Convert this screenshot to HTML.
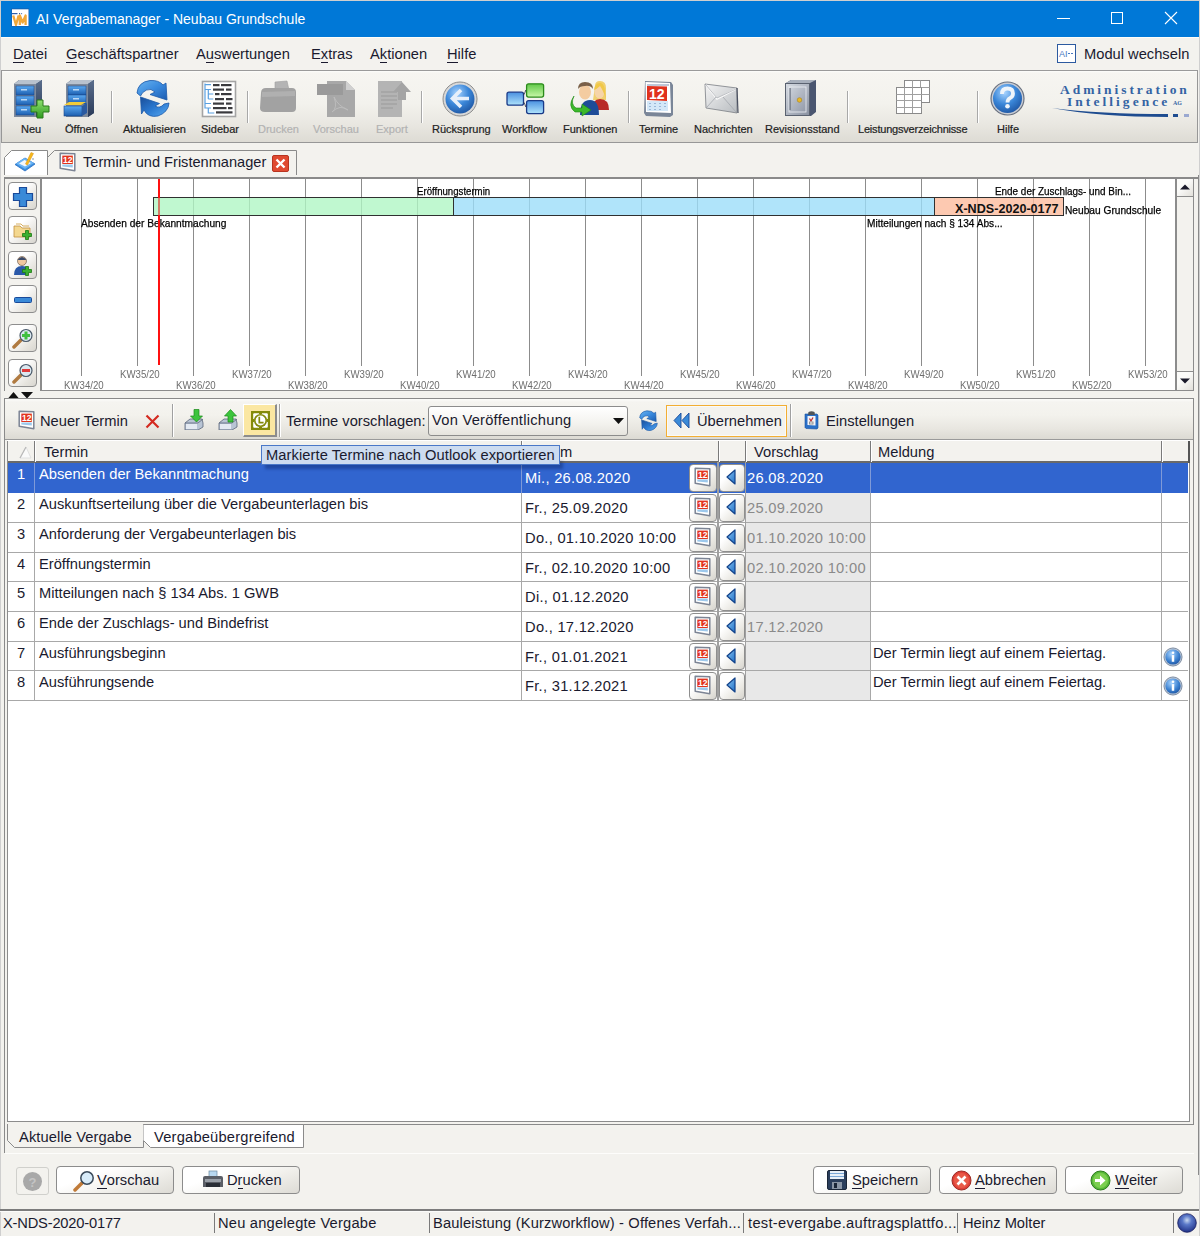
<!DOCTYPE html>
<html><head><meta charset="utf-8">
<style>
*{box-sizing:border-box}
html,body{margin:0;padding:0}
body{width:1200px;height:1236px;overflow:hidden;position:relative;background:#f3f2ee;font-family:"Liberation Sans",sans-serif;color:#1a1a2e;font-size:14.7px}
.a{position:absolute}
.t{position:absolute;white-space:nowrap;line-height:1}
.tl{top:124px;font-size:11px;color:#222;-webkit-text-stroke:0.2px #222}
.dis{color:#b0b0b0;-webkit-text-stroke:0.2px #b8b8b8}
.kw{font-size:10.6px;color:#6e6e6e;transform:scaleX(0.91);transform-origin:0 0}
.ct{font-size:11px;color:#000;-webkit-text-stroke:0.25px #000;transform-origin:0 0}
.lbtn{width:29px;height:28px;border:1px solid #8e8e8e;border-radius:4px;background:linear-gradient(135deg,#ffffff 35%,#e6e4de 75%,#d8d6d0)}
.gbtn{width:28px;border:1px solid #8e8e8e;border-radius:4px;background:linear-gradient(135deg,#ffffff 35%,#e8e6e0 75%,#d6d4ce)}
.dt{letter-spacing:0.28px}
.bbtn{height:28px;border:1px solid #8c8c8c;border-radius:4px;background:linear-gradient(160deg,#ffffff 30%,#f2f1ed 60%,#dddbd5 100%)}
u{text-decoration:none;border-bottom:1px solid currentColor;display:inline-block;line-height:0.95}
</style></head><body>
<!-- window frame -->
<div class="a" style="left:0;top:0;width:1200px;height:1236px;border-left:1px solid #cfcfcf;border-right:1px solid #cfcfcf;border-top:1px solid #cfcfcf"></div>
<!-- title bar -->
<div class="a" style="left:1px;top:1px;width:1198px;height:36px;background:#0078d7"></div>
<svg class="a" style="left:8px;top:5px" width="25" height="25" viewBox="8 5 25 25">
 <rect x="11.5" y="8.5" width="17.5" height="18" fill="#1a5aa8"/>
 <rect x="12" y="9.3" width="16.5" height="16.7" fill="#fff"/>
 <rect x="12" y="13" width="5.5" height="1.2" fill="#3060a8"/><rect x="19" y="13" width="1.1" height="1.2" fill="#3060a8"/><rect x="21" y="13" width="1.1" height="1.2" fill="#6a8ac0"/>
 <path d="M13.2 15.5 L16 25 L18.6 15.5 M19.8 25 V15.5 L22.6 22.5 L25.6 15.5 V25" stroke="#f2a838" stroke-width="2.3" fill="none" stroke-linejoin="round"/>
</svg>
<div class="t" style="left:36px;top:12px;color:#fff;font-size:14px">AI Vergabemanager - Neubau Grundschule</div>
<div class="a" style="left:1057px;top:18px;width:13px;height:1px;background:#fff"></div>
<div class="a" style="left:1111px;top:12px;width:12px;height:12px;border:1px solid #fff"></div>
<svg class="a" style="left:1164px;top:11px" width="14" height="14"><path d="M1 1L13 13M13 1L1 13" stroke="#fff" stroke-width="1.1"/></svg>
<!-- menu -->
<div class="a" style="left:1px;top:37px;width:1198px;height:1px;background:#fdfdfa"></div>
<div class="t" style="left:13px;top:47px"><u>D</u>atei</div>
<div class="t" style="left:66px;top:47px"><u>G</u>eschäftspartner</div>
<div class="t" style="left:196px;top:47px">A<u>u</u>swertungen</div>
<div class="t" style="left:311px;top:47px">E<u>x</u>tras</div>
<div class="t" style="left:370px;top:47px">A<u>k</u>tionen</div>
<div class="t" style="left:447px;top:47px"><u>H</u>ilfe</div>
<svg class="a" style="left:1057px;top:44px" width="19" height="19" viewBox="0 0 19 19">
 <rect x="0.5" y="0.5" width="18" height="18" fill="#fff" stroke="#2c5aa0"/>
 <text x="2" y="13" font-family="Liberation Sans" font-size="9" fill="#4a78c0">AI</text>
 <rect x="11" y="9" width="2" height="1" fill="#4a78c0"/><rect x="14" y="9" width="2" height="1" fill="#4a78c0"/>
</svg>
<div class="t" style="left:1084px;top:47px">Modul wechseln</div>
<!-- toolbar -->
<div class="a" style="left:1px;top:70px;width:1197px;height:73px;border:1px solid #979797;border-top-color:#9a9a9a;background:linear-gradient(#fdfdfb 0px,#f6f5f1 2px,#f3f2ed 45%,#e9e7e1 75%,#dddbd4 100%)"></div>
<svg class="a" style="left:0;top:72px" width="1200" height="70" viewBox="0 72 1200 70">
 <defs>
  <linearGradient id="cabB" x1="0" y1="0" x2="0" y2="1"><stop offset="0" stop-color="#5aa8f0"/><stop offset="1" stop-color="#1d5fb0"/></linearGradient>
  <linearGradient id="cabS" x1="0" y1="0" x2="0" y2="1"><stop offset="0" stop-color="#5a6e8c"/><stop offset="1" stop-color="#2a3a58"/></linearGradient>
  <linearGradient id="grn" x1="0" y1="0" x2="0" y2="1"><stop offset="0" stop-color="#8fe070"/><stop offset="1" stop-color="#2e9a1e"/></linearGradient>
  <radialGradient id="blueBall" cx="0.4" cy="0.3" r="0.8"><stop offset="0" stop-color="#a8d4ff"/><stop offset="0.5" stop-color="#3a86d8"/><stop offset="1" stop-color="#1a4e9a"/></radialGradient>
  <linearGradient id="arr" x1="0" y1="0" x2="1" y2="1"><stop offset="0" stop-color="#6ab4f0"/><stop offset="0.5" stop-color="#3a8ade"/><stop offset="1" stop-color="#1c5cb0"/></linearGradient><linearGradient id="arr2" x1="0" y1="0" x2="1" y2="1"><stop offset="0" stop-color="#1a4e98"/><stop offset="0.5" stop-color="#2a78d0"/><stop offset="1" stop-color="#5aaaf0"/></linearGradient>
 </defs>
 <!-- Neu cabinet -->
 <path d="M14 84 L19 80 L42 80 L42 113 L36 117 L14 117Z" fill="#34486a"/>
 <path d="M14 84 L19 80 L42 80 L36 84Z" fill="#b8c2ce"/>
 <rect x="14" y="84" width="22" height="33" fill="#7d8a9c"/>
 <path d="M36 84 L42 80 L42 113 L36 117Z" fill="url(#cabS)"/>
 <rect x="16" y="86" width="18" height="9" fill="url(#cabB)" stroke="#1a4488" stroke-width="0.5"/>
 <rect x="21" y="89" width="6" height="1.5" fill="#bcd8f4"/>
 <rect x="16" y="96" width="18" height="9" fill="url(#cabB)" stroke="#1a4488" stroke-width="0.5"/>
 <rect x="21" y="99" width="6" height="1.5" fill="#bcd8f4"/>
 <rect x="16" y="106" width="18" height="9" fill="url(#cabB)" stroke="#1a4488" stroke-width="0.5"/>
 <rect x="21" y="109" width="6" height="1.5" fill="#bcd8f4"/>
 <path d="M37 100 h6 v6 h6 v6 h-6 v6 h-6 v-6 h-6 v-6 h6z" fill="url(#grn)" stroke="#2a7a1a" stroke-width="1"/>
 <!-- Oeffnen cabinet -->
 <path d="M66 84 L71 80 L94 80 L94 113 L88 117 L66 117Z" fill="#34486a"/>
 <path d="M66 84 L71 80 L94 80 L88 84Z" fill="#b8c2ce"/>
 <rect x="66" y="84" width="22" height="33" fill="#7d8a9c"/>
 <path d="M88 84 L94 80 L94 113 L88 117Z" fill="url(#cabS)"/>
 <rect x="68" y="86" width="18" height="9" fill="url(#cabB)" stroke="#1a4488" stroke-width="0.5"/>
 <rect x="73" y="89" width="6" height="1.5" fill="#bcd8f4"/>
 <rect x="68" y="95" width="18" height="9" fill="url(#cabB)" stroke="#1a4488" stroke-width="0.5"/>
 <rect x="73" y="98" width="6" height="1.5" fill="#bcd8f4"/>
 <path d="M64 105 L81 105 L86 102 L69 102Z" fill="#f2cc38"/>
 <rect x="64" y="106" width="18" height="10" fill="url(#cabB)" stroke="#1a4488" stroke-width="0.6"/>
 <path d="M82 106 L87 103 L87 113 L82 116Z" fill="#2a5aa0"/>
 <!-- separators -->
 <g stroke="#a8a8a8" stroke-width="1"><path d="M111.5 91V123M247.5 91V123M421.5 91V123M628.5 91V123M847.5 91V123M977.5 91V123"/></g>
 <g stroke="#ffffff" stroke-width="1"><path d="M112.5 91V123M248.5 91V123M422.5 91V123M629.5 91V123M848.5 91V123M978.5 91V123"/></g>
 <!-- Aktualisieren -->
 <path d="M137 93 Q138 82 150 80.5 Q159 80 163 85 L166 83 L167 100 L150 94.5 L155 92 Q151 88 146.5 90 Q142 92 140.5 96 Z" fill="url(#arr)" stroke="#1a58a8" stroke-width="0.8"/>
 <path d="M140.5 97 L159.5 103.5 L155 106 Q160 109 164 104 L169 103 Q168.5 112 158 116 Q148 118 144 110 L141.5 114 Z" fill="url(#arr2)" stroke="#1a58a8" stroke-width="0.8"/>
 <!-- Sidebar doc -->
 <rect x="202.5" y="81.5" width="33" height="35" fill="#fff" stroke="#a4a4a4" stroke-width="1.6"/>
 <g stroke="#5aa0e0" stroke-width="1.2" fill="none"><path d="M205 83.5V108.5M205 84.7h6M205 89.5h6M208.3 89.5V99M208.3 94h5M208.3 99h5M205 103.5h6M205 108h6M208.3 108V113h6"/></g>
 <g fill="#3a3a3e">
  <rect x="213" y="84" width="6.5" height="2.2"/><rect x="221" y="84" width="10.5" height="2.2"/>
  <rect x="213" y="88.5" width="11" height="2.2"/><rect x="226" y="88.5" width="5.5" height="2.2"/>
  <rect x="215" y="93" width="4.5" height="2.2"/><rect x="221" y="93" width="10.5" height="2.2"/>
  <rect x="215" y="98" width="9" height="2.2"/><rect x="226" y="98" width="6.5" height="2.2"/>
  <rect x="213" y="102.5" width="11" height="2.2"/><rect x="226" y="102.5" width="5.5" height="2.2"/>
  <rect x="213" y="107" width="13.5" height="2.2"/><rect x="228" y="107" width="4.5" height="2.2"/>
  <rect x="216" y="111.3" width="16.5" height="2.2"/>
 </g>
 <!-- Drucken disabled -->
 <path d="M275 82 L287 81 L289 90 L275 91Z" fill="#b4b4b4" stroke="#a0a0a0" stroke-width="0.6"/>
 <path d="M261 93 Q261 88 266 88 L292 88 Q296 88 296 92 L296 108 Q296 112 292 112 L265 112 Q260 112 260 108Z" fill="#a2a2a2"/>
 <path d="M262 92 L295 91 L295 96 L262 97Z" fill="#b0b0b0"/>
 <!-- Vorschau disabled -->
 <path d="M327 81 L346 81 L355 90 L355 117 L327 117Z" fill="#a8a8a8"/>
 <path d="M346 81 L346 90 L355 90Z" fill="#d0d0d0"/>
 <rect x="317" y="84" width="26" height="11" fill="#9a9a9a"/>
 <path d="M334 97 Q338 108 332 112 Q340 104 348 110 Q338 106 334 97" stroke="#bcbcbc" fill="none"/>
 <!-- Export disabled -->
 <path d="M378 81 L402 81 L402 117 L378 117Z" fill="#b4b4b4"/>
 <g stroke="#9a9a9a"><path d="M381 92h16M381 96h16M381 100h16M381 104h16M381 108h12"/></g>
 <path d="M393 92 L402 82 L411 92 L406 92 L406 100 L398 100 L398 92Z" fill="#a4a4a4"/>
 <!-- Ruecksprung -->
 <circle cx="460" cy="99" r="17" fill="#d8d8d8" stroke="#8c8c8c" stroke-width="1"/>
 <circle cx="460" cy="99" r="14.5" fill="url(#blueBall)"/>
 <path d="M461 90 L452.5 98.5 L461 107 M453 98.5 H469" stroke="#e8f0fa" stroke-width="3.6" fill="none" stroke-linejoin="miter"/>
 <!-- Workflow -->
 <linearGradient id="wfB" x1="0" y1="0" x2="0" y2="1"><stop offset="0" stop-color="#4a90e0"/><stop offset="1" stop-color="#b0e4fc"/></linearGradient>
 <linearGradient id="wfG" x1="0" y1="0" x2="0" y2="1"><stop offset="0" stop-color="#60c848"/><stop offset="1" stop-color="#c8f8a8"/></linearGradient>
 <rect x="507" y="92.2" width="16.5" height="13" rx="2" fill="url(#wfB)" stroke="#1a3a88" stroke-width="1.3"/>
 <rect x="526.6" y="83.8" width="17" height="13.3" rx="2" fill="url(#wfG)" stroke="#2a8a1a" stroke-width="1.3"/>
 <rect x="526.6" y="100.6" width="17" height="13" rx="2" fill="url(#wfB)" stroke="#1a3a88" stroke-width="1.3"/>
 <path d="M523.5 95 Q525 93 525.8 90 M523.5 102 Q525 104 525.8 107" stroke="#303848" stroke-width="0.9" fill="none"/>
 <!-- Funktionen people -->
 <path d="M595 86 Q595 81 600 81 Q606 81 606 88 L606 100 L593 100Z" fill="#f0d070"/>
 <ellipse cx="599.5" cy="92" rx="5" ry="6.5" fill="#f6d4a8"/>
 <path d="M594 90 Q595 82 601 83 Q605 85 605 92 L606 99 Q603 90 600 86 Q597 89 594 90Z" fill="#f0c848"/>
 <path d="M592 110 Q592 99 600 99 Q609 99 609 110Z" fill="#b82a28"/>
 <ellipse cx="585" cy="92" rx="6" ry="7.5" fill="#f4cca0"/>
 <path d="M578 89 Q578 82 585 82 Q593 82 593 89 Q590 85 585 86 Q580 86 578 89Z" fill="#7a6048"/>
 <path d="M580 115 Q580 100 590 100 Q599 100 599 115Z" fill="#1e4c98"/>
 <path d="M574 96 Q570 104 576 108 L582 108 L582 104 L591 110 L582 116 L582 112 L575 112 Q567 106 574 96Z" fill="#3cb82c" stroke="#1e8a14" stroke-width="0.6"/>
 <!-- Termine calendar -->
 <path d="M645 81 L671 82 L673 85 L673 115 L670 117 L646 116 L644 113Z" fill="#7a8698"/>
 <path d="M645.5 82 L670 83 L671 113 L646 112Z" fill="#fff"/>
 <rect x="647" y="84" width="22" height="2" fill="#c0c8d8"/>
 <path d="M647 86 L667 86.5 L667 101 L647 100Z" fill="#e0321e"/>
 <text x="649" y="99" font-family="Liberation Sans" font-weight="bold" font-size="14" fill="#fff">12</text>
 <rect x="647" y="101" width="21" height="10" fill="#d4e8f8"/>
 <g fill="#9ab8d8"><rect x="649" y="103" width="2" height="1"/><rect x="654" y="103" width="2" height="1"/><rect x="659" y="103" width="2" height="1"/><rect x="664" y="103" width="2" height="1"/><rect x="649" y="106" width="2" height="1"/><rect x="654" y="106" width="2" height="1"/><rect x="659" y="106" width="2" height="1"/><rect x="664" y="106" width="2" height="1"/><rect x="649" y="109" width="2" height="1"/><rect x="654" y="109" width="2" height="1"/><rect x="659" y="109" width="2" height="1"/></g>
 <!-- Nachrichten envelope -->
 <linearGradient id="env" x1="0" y1="0" x2="1" y2="1"><stop offset="0" stop-color="#f4f4f4"/><stop offset="1" stop-color="#b8bcc0"/></linearGradient>
 <path d="M705 84 L737 88 L737 113 L706 108Z" fill="url(#env)" stroke="#7a7e84" stroke-width="0.8"/>
 <path d="M706 85 L717 99 L736 89" stroke="#fafafa" stroke-width="1.6" fill="none"/>
 <path d="M706 85 L717 98 L736 89" stroke="#9a9ea4" stroke-width="0.6" fill="none"/>
 <path d="M707 107 L716 97 M736 112 L723 97" stroke="#a4a8ae" stroke-width="0.8" fill="none"/>
 <path d="M737 88 L738 113" stroke="#4a5060" stroke-width="1.2"/>
 <!-- Revisionsstand safe -->
 <linearGradient id="safeF" x1="0" y1="0" x2="1" y2="1"><stop offset="0" stop-color="#d8dde4"/><stop offset="1" stop-color="#8890a0"/></linearGradient>
 <path d="M786 83 L791 80 L816 80 L816 112 L811 116 L786 116Z" fill="#4a5670"/>
 <path d="M786 83 L791 80 L816 80 L810 83Z" fill="#a8b0bc"/>
 <rect x="785.5" y="83.5" width="24" height="32" fill="url(#safeF)" stroke="#5a6270"/>
 <rect x="789" y="87" width="17" height="25" fill="none" stroke="#eef0f4" stroke-width="0.8"/>
 <rect x="789.5" y="88" width="1.2" height="22" fill="#6a7280"/>
 <circle cx="799.5" cy="100" r="2.3" fill="#e8b828" stroke="#a07810" stroke-width="0.5"/>
 <!-- Leistungsverzeichnisse grid -->
 <g fill="#fff" stroke="#8a8a8a" stroke-width="1">
  <rect x="904.5" y="80.5" width="25" height="22"/>
  <rect x="896.5" y="87.5" width="25" height="26"/>
 </g>
 <g stroke="#a0a0a0"><path d="M904.5 87.5V113M912.5 87.5V113M896.5 94.5H921.5M896.5 100.5H921.5M896.5 107.5H921.5M912.5 80.5V87.5M920.5 80.5V87.5M921.5 87.5H929.5M921.5 94.5H929.5"/></g>
 <!-- Hilfe -->
 <circle cx="1007.5" cy="98.5" r="16.5" fill="#c8ccd4" stroke="#6a7280" stroke-width="1.2"/>
 <circle cx="1007.5" cy="98.5" r="14.5" fill="url(#blueBall)"/>
 <path d="M1002 94 Q1002 88.5 1007.5 88.5 Q1013 88.5 1013 93.5 Q1013 96.5 1010 98.2 Q1007.5 99.6 1007.5 102.5" stroke="#eef4fa" stroke-width="3.8" fill="none"/>
 <circle cx="1007.5" cy="106.3" r="2.3" fill="#eef4fa"/>
 <!-- logo -->
 <text x="1060" y="94" font-family="Liberation Serif" font-weight="bold" font-size="13.5" letter-spacing="2.95" fill="#3464a4">Administration</text>
 <text x="1067" y="105.5" font-family="Liberation Serif" font-weight="bold" font-size="13.5" letter-spacing="3.05" fill="#3464a4">Intelligence</text>
 <text x="1173" y="105" font-family="Liberation Serif" font-weight="bold" font-size="6" fill="#3464a4">AG</text>
 <path d="M1052 108 Q1100 114 1168 114 L1168 117 Q1100 117 1052 108Z" fill="#1e4c90"/>
 <rect x="1173" y="114" width="5" height="3" fill="#1e4c90"/>
 <rect x="1184" y="114" width="5" height="3" fill="#9aa8d0"/>
</svg>
<div class="t tl" style="left:21px">Neu</div>
<div class="t tl" style="left:65px">Öffnen</div>
<div class="t tl" style="left:123px">Aktualisieren</div>
<div class="t tl" style="left:201px">Sidebar</div>
<div class="t tl dis" style="left:258px">Drucken</div>
<div class="t tl dis" style="left:313px">Vorschau</div>
<div class="t tl dis" style="left:376px">Export</div>
<div class="t tl" style="left:432px">Rücksprung</div>
<div class="t tl" style="left:502px">Workflow</div>
<div class="t tl" style="left:563px">Funktionen</div>
<div class="t tl" style="left:639px">Termine</div>
<div class="t tl" style="left:694px">Nachrichten</div>
<div class="t tl" style="left:765px">Revisionsstand</div>
<div class="t tl" style="left:858px;letter-spacing:-0.2px">Leistungsverzeichnisse</div>
<div class="t tl" style="left:997px">Hilfe</div>

<!-- tab strip -->
<svg class="a" style="left:0;top:143px" width="300" height="36" viewBox="0 143 300 36">
 <path d="M4.5 175 V157.5 L11.5 150.5 H47.5 V175" fill="#fff" stroke="#8a8a8a"/>
 <path d="M47.5 157.5 L54.5 150.5 H296.5 V175" fill="#f3f2ee" stroke="#8a8a8a"/>
</svg>
<svg class="a" style="left:14px;top:151px" width="22" height="22" viewBox="0 0 22 22"><path d="M1 13.5 L11 7 L21 13 L11 20Z" fill="#3a8ee0" stroke="#2a6ec0" stroke-width="0.8"/><path d="M2 12.5 L10.5 7 L20 12 L11 18Z" fill="#6ab4f4"/><path d="M5 12.5 L10.5 9 L17 12 L11 15.5Z" fill="#f4f8fc"/><path d="M11.5 13 L17 1.5 L19.5 2.5 L13.5 14Z" fill="#f6b81c" stroke="#d89010" stroke-width="0.5"/><circle cx="19" cy="8" r="1" fill="#b0b8c0"/></svg>
<svg class="a" style="left:59px;top:152px" width="17" height="20" viewBox="0 0 17 20"><path d="M1.2 1.2 L15.8 1.8 L15.8 18.8 L1.2 16.2Z" fill="#fff" stroke="#7c8494" stroke-width="1.5" stroke-linejoin="round"/><rect x="3.3" y="3.6" width="10.5" height="8.4" fill="#e2341f"/><text x="4" y="11" font-family="Liberation Sans" font-weight="bold" font-size="8.5" fill="#fff">12</text><path d="M3.3 12.6 H13.8 V15.6 L3.3 14.4Z" fill="#9cc8ec"/></svg>
<div class="t" style="left:83px;top:155px;font-size:14.6px">Termin- und Fristenmanager</div>
<svg class="a" style="left:272px;top:155px" width="17" height="17" viewBox="0 0 17 17"><rect x="0.5" y="0.5" width="16" height="16" rx="1.5" fill="#e04a30" stroke="#b83420"/><path d="M4.5 4.5 L12.5 12.5 M12.5 4.5 L4.5 12.5" stroke="#fff" stroke-width="2.4"/></svg>
<!-- timeline panel -->
<div class="a" style="left:4px;top:177px;width:1195px;height:2px;background:#8a8a8a"></div>
<div class="a" style="left:4px;top:177px;width:1px;height:214px;background:#8a8a8a"></div>
<div class="a" style="left:1198px;top:175px;width:1px;height:1000px;background:#8a8a8a"></div>
<div class="a" style="left:40px;top:178px;width:2px;height:213px;background:#8c8c8c"></div>
<div class="a" style="left:42px;top:179px;width:1134px;height:211px;background:#fff"></div>
<div class="a" style="left:40px;top:390px;width:1154px;height:1px;background:#8c8c8c"></div>
<div class="a" style="left:1175px;top:179px;width:19px;height:212px;background:#f3f2ee;border-left:2px solid #8c8c8c;border-right:1px solid #8c8c8c;border-bottom:1px solid #8c8c8c"></div>
<div class="a" style="left:1177px;top:179px;width:16px;height:18px;background:linear-gradient(135deg,#fbfbf9 40%,#e2e0da);border-bottom:1px solid #8c8c8c"></div>
<div class="a" style="left:1177px;top:371px;width:16px;height:19px;background:linear-gradient(135deg,#fbfbf9 40%,#e2e0da);border-top:1px solid #8c8c8c"></div>
<svg class="a" style="left:1180px;top:184px" width="10" height="6"><path d="M0 5.5 L5 0.5 L10 5.5Z" fill="#1a1a2a"/></svg>
<svg class="a" style="left:1180px;top:378px" width="10" height="6"><path d="M0 0.5 L5 5.5 L10 0.5Z" fill="#1a1a2a"/></svg>
<svg class="a" style="left:0;top:0" width="1200" height="400" viewBox="0 0 1200 400"><rect x="81" y="179" width="1" height="197" fill="#8c8c8c"/><rect x="137" y="179" width="1" height="187" fill="#8c8c8c"/><rect x="193" y="179" width="1" height="197" fill="#8c8c8c"/><rect x="249" y="179" width="1" height="187" fill="#8c8c8c"/><rect x="305" y="179" width="1" height="197" fill="#8c8c8c"/><rect x="361" y="179" width="1" height="187" fill="#8c8c8c"/><rect x="417" y="179" width="1" height="197" fill="#8c8c8c"/><rect x="473" y="179" width="1" height="187" fill="#8c8c8c"/><rect x="529" y="179" width="1" height="197" fill="#8c8c8c"/><rect x="585" y="179" width="1" height="187" fill="#8c8c8c"/><rect x="641" y="179" width="1" height="197" fill="#8c8c8c"/><rect x="697" y="179" width="1" height="187" fill="#8c8c8c"/><rect x="753" y="179" width="1" height="197" fill="#8c8c8c"/><rect x="809" y="179" width="1" height="187" fill="#8c8c8c"/><rect x="865" y="179" width="1" height="197" fill="#8c8c8c"/><rect x="921" y="179" width="1" height="187" fill="#8c8c8c"/><rect x="977" y="179" width="1" height="197" fill="#8c8c8c"/><rect x="1033" y="179" width="1" height="187" fill="#8c8c8c"/><rect x="1089" y="179" width="1" height="197" fill="#8c8c8c"/><rect x="1145" y="179" width="1" height="187" fill="#8c8c8c"/></svg>
<div class="a" style="left:153px;top:197px;width:301px;height:19px;background:rgba(176,246,196,0.8);border:1px solid #303030;border-right:none"></div>
<div class="a" style="left:453px;top:197px;width:482px;height:19px;background:rgba(156,221,249,0.8);border:1px solid #303030;border-right:none"></div>
<div class="a" style="left:934px;top:197px;width:130px;height:19px;background:rgba(252,187,157,0.8);border:1px solid #303030"></div>
<div class="t kw" style="left:64px;top:380px">KW34/20</div>
<div class="t kw" style="left:120px;top:368.5px">KW35/20</div>
<div class="t kw" style="left:176px;top:380px">KW36/20</div>
<div class="t kw" style="left:232px;top:368.5px">KW37/20</div>
<div class="t kw" style="left:288px;top:380px">KW38/20</div>
<div class="t kw" style="left:344px;top:368.5px">KW39/20</div>
<div class="t kw" style="left:400px;top:380px">KW40/20</div>
<div class="t kw" style="left:456px;top:368.5px">KW41/20</div>
<div class="t kw" style="left:512px;top:380px">KW42/20</div>
<div class="t kw" style="left:568px;top:368.5px">KW43/20</div>
<div class="t kw" style="left:624px;top:380px">KW44/20</div>
<div class="t kw" style="left:680px;top:368.5px">KW45/20</div>
<div class="t kw" style="left:736px;top:380px">KW46/20</div>
<div class="t kw" style="left:792px;top:368.5px">KW47/20</div>
<div class="t kw" style="left:848px;top:380px">KW48/20</div>
<div class="t kw" style="left:904px;top:368.5px">KW49/20</div>
<div class="t kw" style="left:960px;top:380px">KW50/20</div>
<div class="t kw" style="left:1016px;top:368.5px">KW51/20</div>
<div class="t kw" style="left:1072px;top:380px">KW52/20</div>
<div class="t kw" style="left:1128px;top:368.5px">KW53/20</div>
<div class="t ct" style="left:81px;top:218px;transform:scaleX(0.925)">Absenden der Bekanntmachung</div>
<div class="t ct" style="left:417px;top:186px;transform:scaleX(0.875)">Eröffnungstermin</div>
<div class="t ct" style="left:995px;top:186px;transform:scaleX(0.9)">Ende der Zuschlags- und Bin...</div>
<div class="t ct" style="left:1065px;top:205px;transform:scaleX(0.925)">Neubau Grundschule</div>
<div class="t ct" style="left:867px;top:218px;transform:scaleX(0.92)">Mitteilungen nach § 134 Abs...</div>
<div class="t" style="left:955px;top:203px;font-size:12.6px;font-weight:bold;color:#111">X-NDS-2020-0177</div>
<div class="a lbtn" style="left:8px;top:182px"></div>
<div class="a lbtn" style="left:8px;top:216px"></div>
<div class="a lbtn" style="left:8px;top:251px"></div>
<div class="a lbtn" style="left:8px;top:285px"></div>
<div class="a lbtn" style="left:8px;top:324px"></div>
<div class="a lbtn" style="left:8px;top:359px"></div>
<svg class="a" style="left:12px;top:186px" width="22" height="22" viewBox="0 0 22 22"><path d="M7.5 1.5h7v6h6v7h-6v6h-7v-6h-6v-7h6z" fill="#3a8ad8" stroke="#1a4a9a" stroke-width="1.2"/></svg>
<svg class="a" style="left:12px;top:220px" width="22" height="22" viewBox="0 0 22 22"><path d="M2 6 L8 6 L10 8 L18 8 L18 17 L2 17Z" fill="#f4d890" stroke="#c09040" stroke-width="0.8"/><path d="M4 4 L9 4 L11 6 L17 6" stroke="#d8b060" fill="none"/><path d="M13.5 10.5h3v3h3v3h-3v3h-3v-3h-3v-3h3z" fill="#3ab030" stroke="#1a7a10" stroke-width="0.8"/></svg>
<svg class="a" style="left:12px;top:255px" width="22" height="22" viewBox="0 0 22 22"><circle cx="10" cy="6" r="4.5" fill="#f0c8a0" stroke="#5a4a3a" stroke-width="0.6"/><path d="M5.5 5 Q10 -1 14.5 5Z" fill="#3a4a6a"/><path d="M2 20 Q2 11 10 11 Q14 11 15 13 L15 20Z" fill="#2a58a8"/><path d="M13.5 11.5h3v3h3v3h-3v3h-3v-3h-3v-3h3z" fill="#3ab030" stroke="#1a7a10" stroke-width="0.8"/></svg>
<svg class="a" style="left:12px;top:289px" width="22" height="22" viewBox="0 0 22 22"><rect x="2.5" y="8.5" width="17" height="5" rx="1" fill="#3a8ad8" stroke="#1a4a9a"/></svg>
<svg class="a" style="left:12px;top:328px" width="22" height="22" viewBox="0 0 22 22"><path d="M2 19 L9 12" stroke="#b07a40" stroke-width="3.5" stroke-linecap="round"/><circle cx="14" cy="7.5" r="6" fill="#dce8f0" stroke="#4a5a6a" stroke-width="1.2"/><path d="M12.5 3.5h3v2.5h2.5v3h-2.5v2.5h-3v-2.5h-2.5v-3h2.5z" fill="#40c040"/></svg>
<svg class="a" style="left:12px;top:363px" width="22" height="22" viewBox="0 0 22 22"><path d="M2 19 L9 12" stroke="#b07a40" stroke-width="3.5" stroke-linecap="round"/><circle cx="14" cy="7.5" r="6" fill="#dce8f0" stroke="#4a5a6a" stroke-width="1.2"/><rect x="10" y="6" width="8" height="3" fill="#e03a3a"/></svg>
<svg class="a" style="left:0;top:390px" width="40" height="9"><path d="M8 8.5 L13.5 2 L19 8.5Z M21 2 L33 2 L27 8.5Z" fill="#111"/></svg>
<div class="a" style="left:158px;top:179px;width:2px;height:19px;background:#ff1010"></div>
<div class="a" style="left:158px;top:198px;width:2px;height:17px;background:rgba(220,40,30,0.6)"></div>
<div class="a" style="left:158px;top:215px;width:2px;height:150px;background:#ff1010"></div>
<!-- lower panel -->
<div class="a" style="left:4px;top:398px;width:1190px;height:1px;background:#8a8a8a"></div>
<div class="a" style="left:4px;top:398px;width:1px;height:755px;background:#8a8a8a"></div>
<div class="a" style="left:1193px;top:398px;width:1px;height:727px;background:#8a8a8a"></div>
<div class="a" style="left:5px;top:399px;width:1188px;height:40px;background:linear-gradient(#fcfcfa 0px,#f5f4f0 3px,#f3f2ed 40%,#e8e6e0 75%,#dcdad3 100%)"></div>
<svg class="a" style="left:18px;top:410px" width="17" height="20" viewBox="0 0 17 20"><path d="M1.2 1.2 L15.8 1.8 L15.8 18.8 L1.2 16.2Z" fill="#fff" stroke="#7c8494" stroke-width="1.5" stroke-linejoin="round"/><rect x="3.3" y="3.6" width="10.5" height="8.4" fill="#e2341f"/><text x="4" y="11" font-family="Liberation Sans" font-weight="bold" font-size="8.5" fill="#fff">12</text><path d="M3.3 12.6 H13.8 V15.6 L3.3 14.4Z" fill="#9cc8ec"/></svg>
<div class="t" style="left:40px;top:414px">Neuer Termin</div>
<svg class="a" style="left:145px;top:414px" width="15" height="15"><path d="M1.5 1.5 L13.5 13.5 M13.5 1.5 L1.5 13.5" stroke="#d42a20" stroke-width="2.2"/></svg>
<div class="a" style="left:172px;top:404px;width:1px;height:33px;background:#a0a0a0;box-shadow:1px 0 0 #fff"></div>
<svg class="a" style="left:184px;top:409px" width="20" height="21" viewBox="0 0 20 21"><path d="M1 14 L6 10 L18 10 L19 14 L19 18 L14 21 L1 21Z" fill="#b8c4d4" stroke="#5a6478" stroke-width="0.8"/><path d="M1 14 L14 14 L19 10" stroke="#5a6478" fill="none" stroke-width="0.8"/><rect x="2" y="15" width="11" height="5" fill="#e4eaf2"/><path d="M10 0.5 H15 V7 H18.5 L12.5 13 L6.5 7 H10Z" fill="#3cc43c" stroke="#1a8a1a" stroke-width="0.7"/></svg>
<svg class="a" style="left:218px;top:409px" width="20" height="21" viewBox="0 0 20 21"><path d="M1 14 L6 10 L18 10 L19 14 L19 18 L14 21 L1 21Z" fill="#b8c4d4" stroke="#5a6478" stroke-width="0.8"/><path d="M1 14 L14 14 L19 10" stroke="#5a6478" fill="none" stroke-width="0.8"/><rect x="2" y="15" width="11" height="5" fill="#e4eaf2"/><path d="M10 13 H15 V7 H18.5 L12.5 0.5 L6.5 7 H10Z" fill="#3cc43c" stroke="#1a8a1a" stroke-width="0.7"/></svg>
<div class="a" style="left:243px;top:404px;width:34px;height:33px;background:#fbe7a2;border-top:1px solid #fff;border-left:1px solid #fff;border-right:2px solid #8c8c8c;border-bottom:2px solid #8c8c8c"></div>
<svg class="a" style="left:250px;top:410px" width="21" height="21" viewBox="250 410 21 21"><rect x="251" y="411" width="19" height="19" fill="#848a0a"/><rect x="253.2" y="413.2" width="14.6" height="14.6" rx="1" fill="#fff"/><circle cx="260.5" cy="420.5" r="6.6" fill="#848a0a"/><rect x="259" y="411" width="3" height="3" fill="#848a0a"/><rect x="259" y="427" width="3" height="3" fill="#848a0a"/><rect x="251" y="419" width="3" height="3" fill="#848a0a"/><rect x="267" y="419" width="3" height="3" fill="#848a0a"/><circle cx="260.5" cy="420.5" r="4.9" fill="#fff"/><path d="M259.3 416.8 V422.6 H263.6" stroke="#848a0a" stroke-width="1.7" fill="none"/></svg>
<div class="a" style="left:279px;top:404px;width:1px;height:33px;background:#a0a0a0;box-shadow:1px 0 0 #fff"></div>
<div class="t" style="left:286px;top:414px">Termine vorschlagen:</div>
<div class="a" style="left:428px;top:406px;width:200px;height:30px;border:1px solid #8c8c8c;border-radius:3px;background:linear-gradient(#ffffff,#f3f2ee 60%,#e6e4de)"></div>
<div class="t" style="left:432px;top:413px;letter-spacing:0.25px">Von Veröffentlichung</div>
<svg class="a" style="left:613px;top:418px" width="11" height="6"><path d="M0 0 H11 L5.5 6Z" fill="#111"/></svg>
<svg class="a" style="left:637px;top:410px" width="23" height="22" viewBox="135 79 36 40"><defs><linearGradient id="arrS" x1="0" y1="0" x2="1" y2="1"><stop offset="0" stop-color="#6ab4f0"/><stop offset="0.5" stop-color="#3a8ade"/><stop offset="1" stop-color="#1c5cb0"/></linearGradient><linearGradient id="arrS2" x1="0" y1="0" x2="1" y2="1"><stop offset="0" stop-color="#1a4e98"/><stop offset="0.5" stop-color="#2a78d0"/><stop offset="1" stop-color="#5aaaf0"/></linearGradient></defs><path d="M137 93 Q138 82 150 80.5 Q159 80 163 85 L166 83 L167 100 L150 94.5 L155 92 Q151 88 146.5 90 Q142 92 140.5 96 Z" fill="url(#arrS)" stroke="#1a58a8" stroke-width="1.2"/><path d="M140.5 97 L159.5 103.5 L155 106 Q160 109 164 104 L169 103 Q168.5 112 158 116 Q148 118 144 110 L141.5 114 Z" fill="url(#arrS2)" stroke="#1a58a8" stroke-width="1.2"/></svg>
<div class="a" style="left:666px;top:405px;width:121px;height:32px;border:1.5px solid #f2ae34;background:#f3f2ee;box-shadow:inset 0 0 0 1px #fbfaf6"></div>
<svg class="a" style="left:673px;top:412px" width="17" height="17" viewBox="0 0 17 17"><path d="M8 1 L8 16 L1 8.5Z M16 1 L16 16 L9 8.5Z" fill="#3a8ad8" stroke="#1a4a9a" stroke-width="0.9"/></svg>
<div class="t" style="left:697px;top:414px">Übernehmen</div>
<div class="a" style="left:790px;top:404px;width:1px;height:33px;background:#a0a0a0;box-shadow:1px 0 0 #fff"></div>
<svg class="a" style="left:803px;top:410px" width="17" height="21" viewBox="0 0 17 21"><path d="M2 4 L14 4 L15 5 L15 18 L14 19 L3 18.5 L2 17.5Z" fill="#2a70c8" stroke="#1a50a0" stroke-width="0.6"/><path d="M4.5 6 L12.5 6 L12.5 15.5 L4.5 15Z" fill="#f4f4f8"/><path d="M5.5 2 Q8.5 0.5 11.5 2 L12 5 L5 5Z" fill="#505458"/><path d="M6.5 8.5 L8 11 L10 7.5" stroke="#c03030" stroke-width="1.3" fill="none"/><rect x="6.5" y="12" width="3.5" height="2" fill="none" stroke="#8a8a8a" stroke-width="0.9"/></svg>
<div class="t" style="left:826px;top:414px">Einstellungen</div>
<div class="a" style="left:7px;top:440px;width:1183px;height:682px;background:#fff;border:1px solid #8c8c8c;border-top:none"></div>
<div class="a" style="left:5px;top:439px;width:1188px;height:1px;background:#9a9a9a"></div>
<div class="a" style="left:7px;top:440px;width:1183px;height:1px;background:#ffffff"></div>
<div class="a" style="left:8px;top:441px;width:1181px;height:21px;background:#f3f2ee"></div>
<div class="a" style="left:8px;top:461px;width:1181px;height:2px;background:#6a6a6a"></div>
<div class="a" style="left:34px;top:441px;width:1px;height:21px;background:#7a7a7a"></div>
<div class="a" style="left:35px;top:441px;width:1px;height:21px;background:#fff"></div>
<div class="a" style="left:521px;top:441px;width:1px;height:21px;background:#7a7a7a"></div>
<div class="a" style="left:522px;top:441px;width:1px;height:21px;background:#fff"></div>
<div class="a" style="left:718px;top:441px;width:1px;height:21px;background:#7a7a7a"></div>
<div class="a" style="left:719px;top:441px;width:1px;height:21px;background:#fff"></div>
<div class="a" style="left:745px;top:441px;width:1px;height:21px;background:#7a7a7a"></div>
<div class="a" style="left:746px;top:441px;width:1px;height:21px;background:#fff"></div>
<div class="a" style="left:870px;top:441px;width:1px;height:21px;background:#7a7a7a"></div>
<div class="a" style="left:871px;top:441px;width:1px;height:21px;background:#fff"></div>
<div class="a" style="left:1161px;top:441px;width:1px;height:21px;background:#7a7a7a"></div>
<div class="a" style="left:1162px;top:441px;width:1px;height:21px;background:#fff"></div>
<div class="a" style="left:1188px;top:441px;width:2px;height:22px;background:#555"></div>
<svg class="a" style="left:18px;top:445px" width="14" height="14"><path d="M2 13 L8 2 L13 13Z" fill="#fafafa" stroke="#e0e0e0"/><path d="M2 13 L8 2" stroke="#b8b8b8" stroke-width="1.2"/></svg>
<div class="t" style="left:44px;top:445px">Termin</div>
<div class="t" style="left:529px;top:445px">Datum</div>
<div class="t" style="left:754px;top:445px">Vorschlag</div>
<div class="t" style="left:878px;top:445px">Meldung</div>
<div class="a" style="left:8px;top:463px;width:1180px;height:30px;background:#3165cf"></div>
<div class="a" style="left:34px;top:463px;width:1px;height:30px;background:#7f9ad8"></div>
<div class="a" style="left:521px;top:463px;width:1px;height:30px;background:#7f9ad8"></div>
<div class="a" style="left:870px;top:463px;width:1px;height:30px;background:#7f9ad8"></div>
<div class="a" style="left:1161px;top:463px;width:1px;height:30px;background:#7f9ad8"></div>
<div class="a" style="left:717px;top:462px;width:2px;height:31px;background:#a0a0a0"></div>
<div class="a" style="left:745px;top:462px;width:1px;height:31px;background:#a0a0a0"></div>
<div class="t" style="left:8px;width:26px;text-align:center;top:467px;color:#fff">1</div>
<div class="t" style="left:39px;top:467px;color:#fff">Absenden der Bekanntmachung</div>
<div class="t dt" style="left:525px;top:471px;color:#fff">Mi., 26.08.2020</div>
<div class="t dt" style="left:747px;top:471px;color:#fff">26.08.2020</div>
<div class="a gbtn" style="left:689px;top:464px;height:28px"></div>
<div class="a gbtn" style="left:719px;top:464px;width:26px;height:28px"></div>
<svg class="a" style="left:694px;top:467px" width="17" height="20" viewBox="0 0 17 20"><path d="M1.2 1.2 L15.8 1.8 L15.8 18.8 L1.2 16.2Z" fill="#fff" stroke="#7c8494" stroke-width="1.5" stroke-linejoin="round"/><rect x="3.3" y="3.6" width="10.5" height="8.4" fill="#e2341f"/><text x="4" y="11" font-family="Liberation Sans" font-weight="bold" font-size="8.5" fill="#fff">12</text><path d="M3.3 12.6 H13.8 V15.6 L3.3 14.4Z" fill="#9cc8ec"/></svg>
<svg class="a" style="left:726px;top:469px" width="10" height="16" viewBox="0 0 10 16"><path d="M9 1 L9 15 L1 8Z" fill="url(#ab)" stroke="#12428a" stroke-width="1.2" stroke-linejoin="round"/></svg>
<div class="a" style="left:746px;top:493px;width:124px;height:29px;background:#e8e8e8"></div>
<div class="a" style="left:8px;top:522px;width:1180px;height:1px;background:#a8a8a8"></div>
<div class="a" style="left:34px;top:493px;width:1px;height:29px;background:#a8a8a8"></div>
<div class="a" style="left:521px;top:493px;width:1px;height:29px;background:#a8a8a8"></div>
<div class="a" style="left:870px;top:493px;width:1px;height:29px;background:#a8a8a8"></div>
<div class="a" style="left:1161px;top:493px;width:1px;height:29px;background:#a8a8a8"></div>
<div class="a" style="left:717px;top:492px;width:2px;height:31px;background:#a0a0a0"></div>
<div class="a" style="left:745px;top:492px;width:1px;height:31px;background:#a0a0a0"></div>
<div class="t" style="left:8px;width:26px;text-align:center;top:497px;color:#1a1a2e">2</div>
<div class="t" style="left:39px;top:497px;color:#1a1a2e">Auskunftserteilung über die Vergabeunterlagen bis</div>
<div class="t dt" style="left:525px;top:501px;color:#1a1a2e">Fr., 25.09.2020</div>
<div class="t dt" style="left:747px;top:501px;color:#8a8a8a">25.09.2020</div>
<div class="a gbtn" style="left:689px;top:494px;height:28px"></div>
<div class="a gbtn" style="left:719px;top:494px;width:26px;height:28px"></div>
<svg class="a" style="left:694px;top:497px" width="17" height="20" viewBox="0 0 17 20"><path d="M1.2 1.2 L15.8 1.8 L15.8 18.8 L1.2 16.2Z" fill="#fff" stroke="#7c8494" stroke-width="1.5" stroke-linejoin="round"/><rect x="3.3" y="3.6" width="10.5" height="8.4" fill="#e2341f"/><text x="4" y="11" font-family="Liberation Sans" font-weight="bold" font-size="8.5" fill="#fff">12</text><path d="M3.3 12.6 H13.8 V15.6 L3.3 14.4Z" fill="#9cc8ec"/></svg>
<svg class="a" style="left:726px;top:499px" width="10" height="16" viewBox="0 0 10 16"><path d="M9 1 L9 15 L1 8Z" fill="url(#ab)" stroke="#12428a" stroke-width="1.2" stroke-linejoin="round"/></svg>
<div class="a" style="left:746px;top:523px;width:124px;height:29px;background:#e8e8e8"></div>
<div class="a" style="left:8px;top:552px;width:1180px;height:1px;background:#a8a8a8"></div>
<div class="a" style="left:34px;top:523px;width:1px;height:29px;background:#a8a8a8"></div>
<div class="a" style="left:521px;top:523px;width:1px;height:29px;background:#a8a8a8"></div>
<div class="a" style="left:870px;top:523px;width:1px;height:29px;background:#a8a8a8"></div>
<div class="a" style="left:1161px;top:523px;width:1px;height:29px;background:#a8a8a8"></div>
<div class="a" style="left:717px;top:522px;width:2px;height:31px;background:#a0a0a0"></div>
<div class="a" style="left:745px;top:522px;width:1px;height:31px;background:#a0a0a0"></div>
<div class="t" style="left:8px;width:26px;text-align:center;top:527px;color:#1a1a2e">3</div>
<div class="t" style="left:39px;top:527px;color:#1a1a2e">Anforderung der Vergabeunterlagen bis</div>
<div class="t dt" style="left:525px;top:531px;color:#1a1a2e">Do., 01.10.2020 10:00</div>
<div class="t dt" style="left:747px;top:531px;color:#8a8a8a">01.10.2020 10:00</div>
<div class="a gbtn" style="left:689px;top:524px;height:28px"></div>
<div class="a gbtn" style="left:719px;top:524px;width:26px;height:28px"></div>
<svg class="a" style="left:694px;top:527px" width="17" height="20" viewBox="0 0 17 20"><path d="M1.2 1.2 L15.8 1.8 L15.8 18.8 L1.2 16.2Z" fill="#fff" stroke="#7c8494" stroke-width="1.5" stroke-linejoin="round"/><rect x="3.3" y="3.6" width="10.5" height="8.4" fill="#e2341f"/><text x="4" y="11" font-family="Liberation Sans" font-weight="bold" font-size="8.5" fill="#fff">12</text><path d="M3.3 12.6 H13.8 V15.6 L3.3 14.4Z" fill="#9cc8ec"/></svg>
<svg class="a" style="left:726px;top:529px" width="10" height="16" viewBox="0 0 10 16"><path d="M9 1 L9 15 L1 8Z" fill="url(#ab)" stroke="#12428a" stroke-width="1.2" stroke-linejoin="round"/></svg>
<div class="a" style="left:746px;top:553px;width:124px;height:28px;background:#e8e8e8"></div>
<div class="a" style="left:8px;top:581px;width:1180px;height:1px;background:#a8a8a8"></div>
<div class="a" style="left:34px;top:553px;width:1px;height:28px;background:#a8a8a8"></div>
<div class="a" style="left:521px;top:553px;width:1px;height:28px;background:#a8a8a8"></div>
<div class="a" style="left:870px;top:553px;width:1px;height:28px;background:#a8a8a8"></div>
<div class="a" style="left:1161px;top:553px;width:1px;height:28px;background:#a8a8a8"></div>
<div class="a" style="left:717px;top:552px;width:2px;height:30px;background:#a0a0a0"></div>
<div class="a" style="left:745px;top:552px;width:1px;height:30px;background:#a0a0a0"></div>
<div class="t" style="left:8px;width:26px;text-align:center;top:557px;color:#1a1a2e">4</div>
<div class="t" style="left:39px;top:557px;color:#1a1a2e">Eröffnungstermin</div>
<div class="t dt" style="left:525px;top:561px;color:#1a1a2e">Fr., 02.10.2020 10:00</div>
<div class="t dt" style="left:747px;top:561px;color:#8a8a8a">02.10.2020 10:00</div>
<div class="a gbtn" style="left:689px;top:554px;height:27px"></div>
<div class="a gbtn" style="left:719px;top:554px;width:26px;height:27px"></div>
<svg class="a" style="left:694px;top:557px" width="17" height="20" viewBox="0 0 17 20"><path d="M1.2 1.2 L15.8 1.8 L15.8 18.8 L1.2 16.2Z" fill="#fff" stroke="#7c8494" stroke-width="1.5" stroke-linejoin="round"/><rect x="3.3" y="3.6" width="10.5" height="8.4" fill="#e2341f"/><text x="4" y="11" font-family="Liberation Sans" font-weight="bold" font-size="8.5" fill="#fff">12</text><path d="M3.3 12.6 H13.8 V15.6 L3.3 14.4Z" fill="#9cc8ec"/></svg>
<svg class="a" style="left:726px;top:559px" width="10" height="16" viewBox="0 0 10 16"><path d="M9 1 L9 15 L1 8Z" fill="url(#ab)" stroke="#12428a" stroke-width="1.2" stroke-linejoin="round"/></svg>
<div class="a" style="left:746px;top:582px;width:124px;height:29px;background:#e8e8e8"></div>
<div class="a" style="left:8px;top:611px;width:1180px;height:1px;background:#a8a8a8"></div>
<div class="a" style="left:34px;top:582px;width:1px;height:29px;background:#a8a8a8"></div>
<div class="a" style="left:521px;top:582px;width:1px;height:29px;background:#a8a8a8"></div>
<div class="a" style="left:870px;top:582px;width:1px;height:29px;background:#a8a8a8"></div>
<div class="a" style="left:1161px;top:582px;width:1px;height:29px;background:#a8a8a8"></div>
<div class="a" style="left:717px;top:581px;width:2px;height:31px;background:#a0a0a0"></div>
<div class="a" style="left:745px;top:581px;width:1px;height:31px;background:#a0a0a0"></div>
<div class="t" style="left:8px;width:26px;text-align:center;top:586px;color:#1a1a2e">5</div>
<div class="t" style="left:39px;top:586px;color:#1a1a2e">Mitteilungen nach § 134 Abs. 1 GWB</div>
<div class="t dt" style="left:525px;top:590px;color:#1a1a2e">Di., 01.12.2020</div>
<div class="a gbtn" style="left:689px;top:583px;height:28px"></div>
<div class="a gbtn" style="left:719px;top:583px;width:26px;height:28px"></div>
<svg class="a" style="left:694px;top:586px" width="17" height="20" viewBox="0 0 17 20"><path d="M1.2 1.2 L15.8 1.8 L15.8 18.8 L1.2 16.2Z" fill="#fff" stroke="#7c8494" stroke-width="1.5" stroke-linejoin="round"/><rect x="3.3" y="3.6" width="10.5" height="8.4" fill="#e2341f"/><text x="4" y="11" font-family="Liberation Sans" font-weight="bold" font-size="8.5" fill="#fff">12</text><path d="M3.3 12.6 H13.8 V15.6 L3.3 14.4Z" fill="#9cc8ec"/></svg>
<svg class="a" style="left:726px;top:588px" width="10" height="16" viewBox="0 0 10 16"><path d="M9 1 L9 15 L1 8Z" fill="url(#ab)" stroke="#12428a" stroke-width="1.2" stroke-linejoin="round"/></svg>
<div class="a" style="left:746px;top:612px;width:124px;height:29px;background:#e8e8e8"></div>
<div class="a" style="left:8px;top:641px;width:1180px;height:1px;background:#a8a8a8"></div>
<div class="a" style="left:34px;top:612px;width:1px;height:29px;background:#a8a8a8"></div>
<div class="a" style="left:521px;top:612px;width:1px;height:29px;background:#a8a8a8"></div>
<div class="a" style="left:870px;top:612px;width:1px;height:29px;background:#a8a8a8"></div>
<div class="a" style="left:1161px;top:612px;width:1px;height:29px;background:#a8a8a8"></div>
<div class="a" style="left:717px;top:611px;width:2px;height:31px;background:#a0a0a0"></div>
<div class="a" style="left:745px;top:611px;width:1px;height:31px;background:#a0a0a0"></div>
<div class="t" style="left:8px;width:26px;text-align:center;top:616px;color:#1a1a2e">6</div>
<div class="t" style="left:39px;top:616px;color:#1a1a2e">Ende der Zuschlags- und Bindefrist</div>
<div class="t dt" style="left:525px;top:620px;color:#1a1a2e">Do., 17.12.2020</div>
<div class="t dt" style="left:747px;top:620px;color:#8a8a8a">17.12.2020</div>
<div class="a gbtn" style="left:689px;top:613px;height:28px"></div>
<div class="a gbtn" style="left:719px;top:613px;width:26px;height:28px"></div>
<svg class="a" style="left:694px;top:616px" width="17" height="20" viewBox="0 0 17 20"><path d="M1.2 1.2 L15.8 1.8 L15.8 18.8 L1.2 16.2Z" fill="#fff" stroke="#7c8494" stroke-width="1.5" stroke-linejoin="round"/><rect x="3.3" y="3.6" width="10.5" height="8.4" fill="#e2341f"/><text x="4" y="11" font-family="Liberation Sans" font-weight="bold" font-size="8.5" fill="#fff">12</text><path d="M3.3 12.6 H13.8 V15.6 L3.3 14.4Z" fill="#9cc8ec"/></svg>
<svg class="a" style="left:726px;top:618px" width="10" height="16" viewBox="0 0 10 16"><path d="M9 1 L9 15 L1 8Z" fill="url(#ab)" stroke="#12428a" stroke-width="1.2" stroke-linejoin="round"/></svg>
<div class="a" style="left:746px;top:642px;width:124px;height:28px;background:#e8e8e8"></div>
<div class="a" style="left:8px;top:670px;width:1180px;height:1px;background:#a8a8a8"></div>
<div class="a" style="left:34px;top:642px;width:1px;height:28px;background:#a8a8a8"></div>
<div class="a" style="left:521px;top:642px;width:1px;height:28px;background:#a8a8a8"></div>
<div class="a" style="left:870px;top:642px;width:1px;height:28px;background:#a8a8a8"></div>
<div class="a" style="left:1161px;top:642px;width:1px;height:28px;background:#a8a8a8"></div>
<div class="a" style="left:717px;top:641px;width:2px;height:30px;background:#a0a0a0"></div>
<div class="a" style="left:745px;top:641px;width:1px;height:30px;background:#a0a0a0"></div>
<div class="t" style="left:8px;width:26px;text-align:center;top:646px;color:#1a1a2e">7</div>
<div class="t" style="left:39px;top:646px;color:#1a1a2e">Ausführungsbeginn</div>
<div class="t dt" style="left:525px;top:650px;color:#1a1a2e">Fr., 01.01.2021</div>
<div class="t" style="left:873px;top:646px">Der Termin liegt auf einem Feiertag.</div>
<svg class="a" style="left:1163px;top:647px" width="20" height="20" viewBox="0 0 21 21"><circle cx="10.5" cy="10.5" r="9.5" fill="#b8c4d4" stroke="#7a8aa0"/><circle cx="10.5" cy="10.5" r="8" fill="url(#ib)"/><rect x="9.2" y="8.5" width="2.6" height="7" fill="#fff"/><circle cx="10.5" cy="6" r="1.4" fill="#fff"/></svg>
<div class="a gbtn" style="left:689px;top:643px;height:27px"></div>
<div class="a gbtn" style="left:719px;top:643px;width:26px;height:27px"></div>
<svg class="a" style="left:694px;top:646px" width="17" height="20" viewBox="0 0 17 20"><path d="M1.2 1.2 L15.8 1.8 L15.8 18.8 L1.2 16.2Z" fill="#fff" stroke="#7c8494" stroke-width="1.5" stroke-linejoin="round"/><rect x="3.3" y="3.6" width="10.5" height="8.4" fill="#e2341f"/><text x="4" y="11" font-family="Liberation Sans" font-weight="bold" font-size="8.5" fill="#fff">12</text><path d="M3.3 12.6 H13.8 V15.6 L3.3 14.4Z" fill="#9cc8ec"/></svg>
<svg class="a" style="left:726px;top:648px" width="10" height="16" viewBox="0 0 10 16"><path d="M9 1 L9 15 L1 8Z" fill="url(#ab)" stroke="#12428a" stroke-width="1.2" stroke-linejoin="round"/></svg>
<div class="a" style="left:746px;top:671px;width:124px;height:29px;background:#e8e8e8"></div>
<div class="a" style="left:8px;top:700px;width:1180px;height:1px;background:#a8a8a8"></div>
<div class="a" style="left:34px;top:671px;width:1px;height:29px;background:#a8a8a8"></div>
<div class="a" style="left:521px;top:671px;width:1px;height:29px;background:#a8a8a8"></div>
<div class="a" style="left:870px;top:671px;width:1px;height:29px;background:#a8a8a8"></div>
<div class="a" style="left:1161px;top:671px;width:1px;height:29px;background:#a8a8a8"></div>
<div class="a" style="left:717px;top:670px;width:2px;height:31px;background:#a0a0a0"></div>
<div class="a" style="left:745px;top:670px;width:1px;height:31px;background:#a0a0a0"></div>
<div class="t" style="left:8px;width:26px;text-align:center;top:675px;color:#1a1a2e">8</div>
<div class="t" style="left:39px;top:675px;color:#1a1a2e">Ausführungsende</div>
<div class="t dt" style="left:525px;top:679px;color:#1a1a2e">Fr., 31.12.2021</div>
<div class="t" style="left:873px;top:675px">Der Termin liegt auf einem Feiertag.</div>
<svg class="a" style="left:1163px;top:676px" width="20" height="20" viewBox="0 0 21 21"><circle cx="10.5" cy="10.5" r="9.5" fill="#b8c4d4" stroke="#7a8aa0"/><circle cx="10.5" cy="10.5" r="8" fill="url(#ib)"/><rect x="9.2" y="8.5" width="2.6" height="7" fill="#fff"/><circle cx="10.5" cy="6" r="1.4" fill="#fff"/></svg>
<div class="a gbtn" style="left:689px;top:672px;height:28px"></div>
<div class="a gbtn" style="left:719px;top:672px;width:26px;height:28px"></div>
<svg class="a" style="left:694px;top:675px" width="17" height="20" viewBox="0 0 17 20"><path d="M1.2 1.2 L15.8 1.8 L15.8 18.8 L1.2 16.2Z" fill="#fff" stroke="#7c8494" stroke-width="1.5" stroke-linejoin="round"/><rect x="3.3" y="3.6" width="10.5" height="8.4" fill="#e2341f"/><text x="4" y="11" font-family="Liberation Sans" font-weight="bold" font-size="8.5" fill="#fff">12</text><path d="M3.3 12.6 H13.8 V15.6 L3.3 14.4Z" fill="#9cc8ec"/></svg>
<svg class="a" style="left:726px;top:677px" width="10" height="16" viewBox="0 0 10 16"><path d="M9 1 L9 15 L1 8Z" fill="url(#ab)" stroke="#12428a" stroke-width="1.2" stroke-linejoin="round"/></svg>
<svg width="0" height="0" style="position:absolute"><defs><linearGradient id="ab" x1="0" y1="0" x2="1" y2="1"><stop offset="0" stop-color="#8ac4f0"/><stop offset="1" stop-color="#2070c8"/></linearGradient><radialGradient id="ib" cx="0.4" cy="0.3" r="0.8"><stop offset="0" stop-color="#a8d4ff"/><stop offset="0.6" stop-color="#3a80d0"/><stop offset="1" stop-color="#1a4e9a"/></radialGradient></defs></svg>
<div class="a" style="left:265px;top:461px;width:298px;height:8px;background:rgba(0,20,80,0.35);filter:blur(1.5px)"></div>
<div class="a" style="left:261px;top:445px;width:299px;height:20px;background:#cddcf0;border:1px solid #4a78c8"></div>
<div class="t" style="left:266px;top:448px;letter-spacing:0.08px">Markierte Termine nach Outlook exportieren</div>
<!-- bottom tabs -->
<div class="a" style="left:143px;top:1124px;width:1051px;height:1px;background:#8a8a8a"></div>
<svg class="a" style="left:0;top:1120px" width="310" height="34" viewBox="0 1120 310 34"><path d="M7.5 1124 V1140.5 L14.5 1147.5 H143.5 V1124" fill="#f3f2ee" stroke="#8a8a8a"/><path d="M143.5 1124.5 H303.5 V1147.5 H150.5 L143.5 1140.5" fill="#fff" stroke="#8a8a8a"/></svg>
<div class="t" style="left:19px;top:1130px;letter-spacing:0.1px">Aktuelle Vergabe</div>
<div class="t" style="left:154px;top:1130px;letter-spacing:0.2px">Vergabeübergreifend</div>
<div class="a" style="left:5px;top:1153px;width:1189px;height:1px;background:#fdfdfb"></div>
<div class="a" style="left:16px;top:1167px;width:33px;height:28px;border:1px solid #d0d0cc;border-radius:3px;background:#f3f2ee"></div>
<svg class="a" style="left:22px;top:1171px" width="21" height="21" viewBox="0 0 21 21"><circle cx="10.5" cy="10.5" r="9.5" fill="#a8a8a8"/><text x="6.5" y="15.5" font-family="Liberation Sans" font-weight="bold" font-size="13" fill="#c4c4c4">?</text></svg>
<div class="a bbtn" style="left:56px;top:1166px;width:118px"></div>
<div class="a bbtn" style="left:182px;top:1166px;width:118px"></div>
<div class="a bbtn" style="left:813px;top:1166px;width:118px"></div>
<div class="a bbtn" style="left:939px;top:1166px;width:118px"></div>
<div class="a bbtn" style="left:1065px;top:1166px;width:118px"></div>
<svg class="a" style="left:73px;top:1170px" width="22" height="22" viewBox="0 0 22 22"><path d="M2 20 L9 13" stroke="#c07a38" stroke-width="3.5" stroke-linecap="round"/><circle cx="14" cy="8" r="6.2" fill="#d8ecfa" stroke="#3a4a5a" stroke-width="1.5"/></svg>
<div class="t" style="left:97px;top:1173px"><u>V</u>orschau</div>
<svg class="a" style="left:202px;top:1170px" width="22" height="20" viewBox="0 0 22 20"><rect x="7" y="1" width="8" height="7" fill="#b8d8f0" stroke="#6a8aa0" stroke-width="0.7"/><path d="M1 8 Q1 6 3 6 H19 Q21 6 21 8 V17 H1Z" fill="#5a5e66"/><rect x="3" y="9" width="16" height="3" fill="#9aa0a8"/><rect x="4" y="13" width="14" height="4" fill="#2a2e36"/></svg>
<div class="t" style="left:227px;top:1173px">D<u>r</u>ucken</div>
<svg class="a" style="left:827px;top:1170px" width="20" height="20" viewBox="0 0 20 20"><rect x="0.5" y="0.5" width="19" height="19" rx="1.5" fill="#2a3e5c" stroke="#1a2638"/><rect x="3" y="1" width="14" height="8" fill="#e8f0f8"/><rect x="3" y="3" width="14" height="1" fill="#7aa8d8"/><rect x="3" y="6" width="14" height="1" fill="#7aa8d8"/><rect x="5" y="12" width="10" height="7" fill="#8a96a6"/><rect x="7" y="13" width="3" height="5" fill="#1a2638"/></svg>
<div class="t" style="left:852px;top:1173px"><u>S</u>peichern</div>
<svg class="a" style="left:951px;top:1170px" width="21" height="21" viewBox="0 0 21 21"><circle cx="10.5" cy="10.5" r="9.5" fill="#e04038" stroke="#9a2a22"/><circle cx="10.5" cy="10.5" r="7.5" fill="#e85a48"/><path d="M6.5 6.5 L14.5 14.5 M14.5 6.5 L6.5 14.5" stroke="#fff" stroke-width="2.6"/></svg>
<div class="t" style="left:975px;top:1173px"><u>A</u>bbrechen</div>
<svg class="a" style="left:1090px;top:1170px" width="21" height="21" viewBox="0 0 21 21"><circle cx="10.5" cy="10.5" r="9.5" fill="#58b838" stroke="#2a7a1a"/><circle cx="10.5" cy="10.5" r="7.5" fill="#7ccf50"/><path d="M5 9 H10 V5.5 L15.5 10.5 L10 15.5 V12 H5Z" fill="#fff"/></svg>
<div class="t" style="left:1115px;top:1173px"><u>W</u>eiter</div>
<!-- status bar -->
<div class="a" style="left:0;top:1209px;width:1199px;height:2px;background:#7c7c7c"></div>
<div class="a" style="left:0;top:1211px;width:1199px;height:1px;background:#fbfbf9"></div>
<div class="a" style="left:214px;top:1213px;width:1px;height:20px;background:#7a7a7a"></div>
<div class="a" style="left:429px;top:1213px;width:1px;height:20px;background:#7a7a7a"></div>
<div class="a" style="left:743px;top:1213px;width:1px;height:20px;background:#7a7a7a"></div>
<div class="a" style="left:957px;top:1213px;width:1px;height:20px;background:#7a7a7a"></div>
<div class="a" style="left:1173px;top:1213px;width:1px;height:20px;background:#7a7a7a"></div>
<div class="t" style="left:3px;top:1216px;letter-spacing:-0.2px">X-NDS-2020-0177</div>
<div class="t" style="left:218px;top:1216px;letter-spacing:0.2px">Neu angelegte Vergabe</div>
<div class="t" style="left:433px;top:1216px;letter-spacing:0.15px">Bauleistung (Kurzworkflow) - Offenes Verfah...</div>
<div class="t" style="left:748px;top:1216px;letter-spacing:0.3px">test-evergabe.auftragsplattfo...</div>
<div class="t" style="left:963px;top:1216px">Heinz Molter</div>
<svg class="a" style="left:1177px;top:1213px" width="20" height="20" viewBox="0 0 20 20"><defs><radialGradient id="gl" cx="0.5" cy="0.35" r="0.7"><stop offset="0" stop-color="#c8d8f0"/><stop offset="0.35" stop-color="#5a78c8"/><stop offset="1" stop-color="#1a2a80"/></radialGradient></defs><circle cx="10" cy="10" r="9.3" fill="url(#gl)" stroke="#1a2060" stroke-width="0.8"/></svg>
</body></html>
